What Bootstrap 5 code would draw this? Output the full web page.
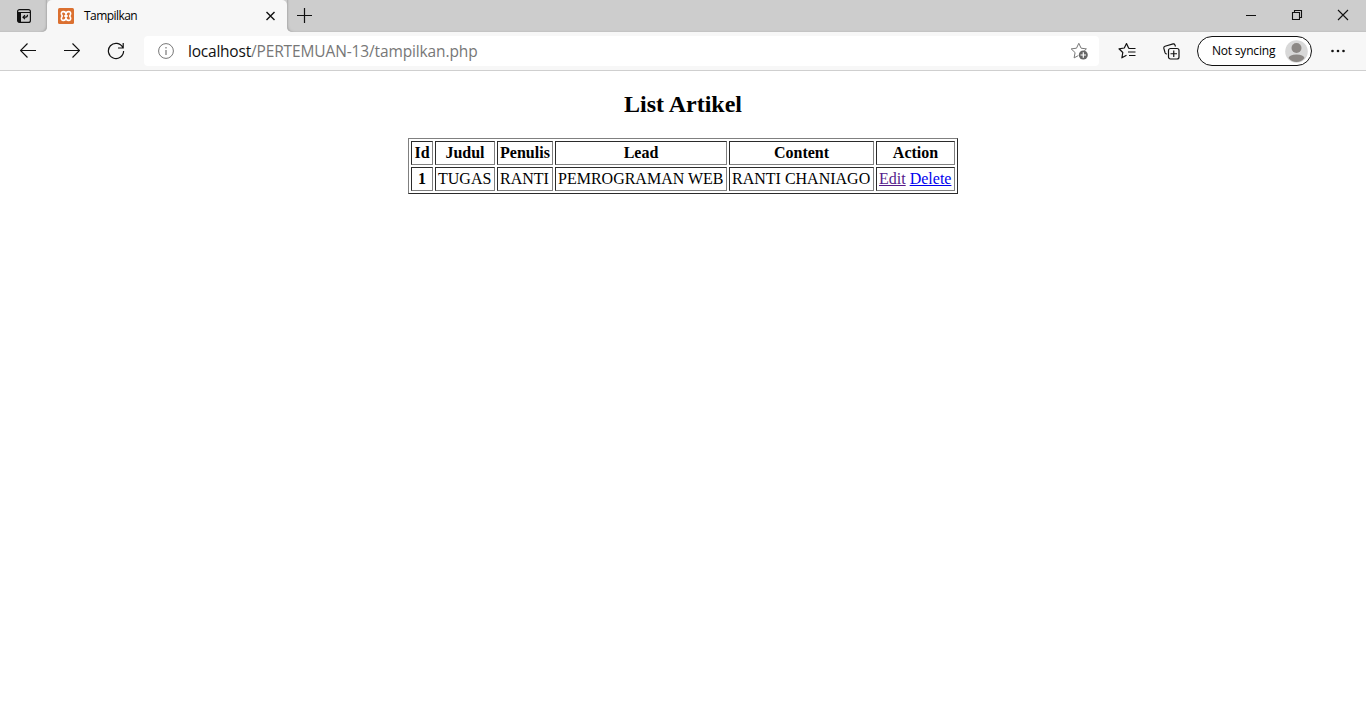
<!DOCTYPE html>
<html lang="id">
<head>
<meta charset="utf-8">
<meta name="viewport" content="width=device-width, initial-scale=1">
<title>Tampilkan</title>
<link href="https://cdn.jsdelivr.net/npm/bootstrap@5.3.0/dist/css/bootstrap.min.css" rel="stylesheet">
<style>
  body { font-family: "Open Sans", "Noto Sans", sans-serif; height: 725px; overflow: hidden; background: #fff; color: #000; }
  svg { display: block; flex: none; fill: none; stroke: #111; stroke-width: 1; }
  .titlebar { height: 32px; background: #f7f7f7; }
  .strip { background: #cdcdcd; }
  .strip-start { width: 47px; padding: 8px 0 0 16px; border-bottom-right-radius: 5px; box-shadow: inset -2px -1px 2px -1px #aaa; }
  .strip-end { border-bottom-left-radius: 5px; box-shadow: inset 2px -1px 2px -1px #aaa; padding: 0 0 1px 10px; }
  .tab-wrap { width: 240px; background: #cdcdcd; }
  .browser-tab { background: #f7f7f7; border-radius: 5px 5px 0 0; padding: 0 11px; }
  .tab-title { font-size: 12px; letter-spacing: -.55px; margin-left: 10px; line-height: 32px; }
  .tab-close { margin-bottom: 1px; }
  .win-btns { gap: 30px; padding: 0 15px 2px 0; }
  .toolbar { height: 39px; background: #f7f7f7; border-bottom: 1px solid #cfcfcf; padding: 0 20px; }
  .nav-btns { gap: 28px; width: 124px; }
  .reload { margin-left: -1px; }
  .address { width: 955px; height: 30px; background: #fff; border-radius: 4px; padding: 0 11px 0 14px; }
  .url { font-size: 15.5px; margin-left: 14px; line-height: 30px; white-space: nowrap; color: #777; letter-spacing: -.13px; }
  .url span { color: #111; letter-spacing: -.22px; }
  .profile { width: 115px; height: 30px; border: 1px solid #111; border-radius: 15px; background: #fff; padding: 0 3px 0 14px; font-size: 12px; margin-left: 17px; }
  .profile span { letter-spacing: -.2px; white-space: nowrap; line-height: 28px; }
  .favorites { margin-left: 19px; }
  .collections { margin-left: 26px; }
  .more { margin-left: 18px; }
  .page { font-family: "Liberation Serif", serif; font-size: 16px; line-height: 18px; padding-top: 20px; }
  .page h2 { font-size: 24px; font-weight: 700; line-height: 27px; margin: 0 0 20px; }
  .articles { width: 550px; table-layout: fixed; border: 1px solid; border-color: #808080 #2b2b2b #2b2b2b #808080; border-collapse: separate; border-spacing: 2px; }
  .articles th, .articles td { height: 24px; padding: 2px; border: 1px solid; border-color: #2b2b2b #808080 #808080 #2b2b2b; white-space: nowrap; }
  .articles th { text-align: center; }
  .c-id { width: 22px; } .c-judul { width: 60px; } .c-penulis { width: 56px; }
  .c-lead { width: 172px; } .c-content { width: 145px; }
  .articles a { color: #0000ee; }
  .articles a.seen { color: #551a8b; }
</style>
</head>
<body>
<header>
  <div class="titlebar d-flex">
    <div class="strip strip-start">
      <svg width="16" height="16" viewBox="0 0 16 16"><rect x="1.600" y="1.600" width="12.800" height="12.800" rx="2" stroke-width="1.200"/><path d="M1.500 4.500h13M3 4v10" stroke-width="1.100"/><path d="M2 4h3v10.500H3q-1 0-1-1z" fill="#111" stroke="none"/><path d="M7.200 9.200h2.600q1.700 0 1.700-2.400M9 7.200l-2 2 2 2" stroke-width="1.200"/></svg>
    </div>
    <div class="tab-wrap">
      <div class="browser-tab d-flex align-items-center h-100">
        <svg width="16" height="16" viewBox="0 0 16 16"><rect width="16" height="16" rx="1.500" fill="#db7030" stroke="none"/><path d="M8 6.500C8 4.500 7 3.600 5.400 3.600 3.700 3.600 3 4.900 3.500 6.300L4.300 8 3.500 9.700C3 11.100 3.700 12.400 5.400 12.400 7 12.400 8 11.500 8 9.500 8 11.500 9 12.400 10.600 12.400 12.300 12.400 13 11.100 12.500 9.700L11.700 8 12.500 6.300C13 4.900 12.300 3.600 10.600 3.600 9 3.600 8 4.500 8 6.500z" stroke="#fff" stroke-width="1.600" stroke-linejoin="round"/><path d="M6.300 8h3.400" stroke="#fff" stroke-width="2"/></svg>
        <span class="tab-title">Tampilkan</span>
        <svg class="tab-close ms-auto" width="11" height="11" viewBox="0 0 11 11"><path d="m1.500 2 8 8m0-8-8 8" stroke-width="1.400"/></svg>
      </div>
    </div>
    <div class="strip strip-end flex-grow-1 d-flex align-items-center justify-content-between">
      <svg width="15" height="15" viewBox="0 0 15 15"><path d="M0 7.500h15M7.500 0v15" stroke-width="1.200"/></svg>
      <div class="win-btns d-flex align-items-center">
        <svg width="16" height="16" viewBox="0 0 16 16"><path d="M3 8.500h10"/></svg>
        <svg width="16" height="16" viewBox="0 0 16 16"><path d="M3.500 5.500h7v7h-7zM5.500 5.500v-2h7v7h-2" stroke-width="1.100"/></svg>
        <svg width="16" height="16" viewBox="0 0 16 16"><path d="m3 3 10 10M13 3 3 13" stroke-width="1.100"/></svg>
      </div>
    </div>
  </div>
  <div class="toolbar d-flex align-items-center">
    <div class="nav-btns d-flex align-items-center">
      <svg width="16" height="16" viewBox="0 0 16 16"><path d="M16 7.500H.7M7.500.5l-7 7 7 7" stroke-width="1.200"/></svg>
      <svg width="16" height="16" viewBox="0 0 16 16"><path d="M0 7.500h15.300M8.500.5l7 7-7 7" stroke-width="1.200"/></svg>
      <svg class="reload" width="18" height="18" viewBox="0 0 18 18"><path d="M15.800 5.500A7.600 7.600 0 1 0 16.600 9M16.200 1v5H11" stroke-width="1.200"/></svg>
    </div>
    <div class="address d-flex align-items-center">
      <svg width="16" height="16" viewBox="0 0 16 16"><circle cx="8" cy="8" r="7.400" stroke="#777"/><path d="M8 7v5M8 4v1.400" stroke="#777" stroke-width="1.200"/></svg>
      <div class="url"><span>localhost</span>/PERTEMUAN-13/tampilkan.php</div>
      <svg class="ms-auto" width="18" height="18" viewBox="0 0 18 18"><path d="m8.800 1.300 2.300 4.900 5.300.7-2.200 2.100M8.800 1.300 6.500 6.200l-5.300.7 3.900 3.700-1 5.300 4.200-2.300" stroke="#777" stroke-linejoin="round"/><circle cx="13.300" cy="13" r="4.500" fill="#666" stroke="none"/><path d="M10.500 13h5.500M13.300 10.300v5.400" stroke="#fff" stroke-width="1.200"/></svg>
    </div>
    <svg class="favorites" width="18" height="18" viewBox="0 0 18 18"><path d="M11.200 6.500 10.600 6 8.500 1.500 6.300 6 1 6.800l3.800 3.700-.9 5.300 4.600-2.500" stroke-width="1.200" stroke-linejoin="round"/><path d="M11 6.500h6.500M10 10h7.500M11 13.500h6.500" stroke-width="1.200"/></svg>
    <svg class="collections" width="18" height="18" viewBox="0 0 18 18"><rect x="6.500" y="6.500" width="10.500" height="10.500" rx="2" stroke-width="1.200"/><path d="M11.750 8.500v6.500M8.500 11.750h6.500M13.500 4.500l-.6-1.600q-.5-1.300-1.800-1L3 4.200q-1.500.5-1.200 2l1.300 4.700q.4 1.100 1.700.9" stroke-width="1.200"/></svg>
    <div class="profile d-flex align-items-center justify-content-between">
      <span>Not syncing</span>
      <svg width="23" height="23" viewBox="0 0 23 23"><g stroke="none"><circle cx="11.500" cy="11.500" r="11.300" fill="#d8d8d8"/><circle cx="11.500" cy="8" r="5" fill="#8c8885"/><path d="M3.500 18q1-3.500 8-3.500t8 3.500q-3 4-8 4t-8-4z" fill="#8c8885"/></g></svg>
    </div>
    <svg class="more" width="16" height="16" viewBox="0 0 16 16"><g fill="#111" stroke="none"><circle cx="2.500" cy="8" r="1.300"/><circle cx="8" cy="8" r="1.300"/><circle cx="13.500" cy="8" r="1.300"/></g></svg>
  </div>
</header>
<main class="page">
  <h2 class="text-center">List Artikel</h2>
  <table class="articles mx-auto">
    <colgroup><col class="c-id"><col class="c-judul"><col class="c-penulis"><col class="c-lead"><col class="c-content"><col></colgroup>
    <tr><th>Id</th><th>Judul</th><th>Penulis</th><th>Lead</th><th>Content</th><th>Action</th></tr>
    <tr><th>1</th><td>TUGAS</td><td>RANTI</td><td>PEMROGRAMAN WEB</td><td>RANTI CHANIAGO</td><td><a class="seen" href="#">Edit</a> <a href="#">Delete</a></td></tr>
  </table>
</main>
<script src="https://cdn.jsdelivr.net/npm/bootstrap@5.3.0/dist/js/bootstrap.bundle.min.js"></script>
</body>
</html>
